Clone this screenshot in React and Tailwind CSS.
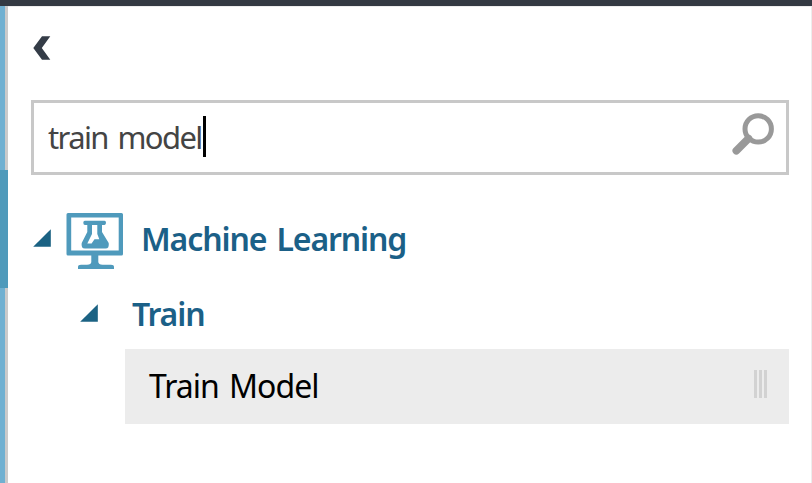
function ExpandedArrow() {
  return (
    <svg className="block h-[18px] w-[18px] shrink-0" viewBox="0 0 18 18">
      <path d="M17.800 0.200V17.800H0.200Z" fill="#1b6283" />
    </svg>
  );
}

function ChevronLeft() {
  return (
    <svg className="block h-[24px] w-[18px]" viewBox="0 0 18 24">
      <path d="M9 0.300H17.300L8.800 12L17.300 23.700H9L0.300 12Z" fill="#343c47" />
    </svg>
  );
}

function SearchIcon() {
  return (
    <svg className="block h-[42px] w-[42px]" viewBox="0 0 42 42" fill="none" stroke="#999999">
      <circle cx="26.2" cy="15.9" r="13.2" strokeWidth="5" />
      <path d="M16.5 25.500L4.300 37.700" strokeWidth="7.600" strokeLinecap="round" />
    </svg>
  );
}

function LabMonitorIcon() {
  return (
    <svg className="block h-[57px] w-[58px] shrink-0" viewBox="0 0 58 57" fill="#4f9abc">
      <path
        fillRule="evenodd"
        d="M2 0H55.500Q57 0 57 1.500V41Q57 42.500 55.500 42.500H2Q0.500 42.500 0.500 41V1.500Q0.500 0 2 0ZM5.200 4.500V37.500H52.700V4.500Z"
      />
      <path d="M25.300 42H32.300V49Q32.500 51.500 36.500 51.700H45Q48 51.700 48 54V56H12V54Q12 51.700 15 51.700H21Q25.300 51.500 25.300 49Z" />
      <path
        fillRule="evenodd"
        d="M19 7.700H38.500Q40 7.700 40 9.800T38.500 12H36V19L42.700 30Q43.500 35.500 39.500 35.500H19Q14.800 35.500 15.700 30L21.300 19V12H19Q17.300 12 17.300 9.800T19 7.700ZM26 12V21L21.300 30.500H25.600L28.500 26.300H33.300L31.300 21V12Z"
      />
    </svg>
  );
}

export default function App() {
  return (
    <div className="flex h-[483px] w-[812px] flex-col overflow-hidden bg-white font-['Noto_Sans','Open_Sans',sans-serif] text-[32px] leading-[44px]">
      <header className="h-[6px] shrink-0 bg-[#343a43]" />
      <div className="flex min-h-0 flex-1">
        <aside className="flex w-2 shrink-0 flex-col">
          <div className="h-[164px] border-r-[3px] border-[#cacaca] bg-[#70b0d1]" />
          <div className="h-[118px] bg-[#4f9abb]" />
          <div className="flex-1 border-r-[3px] border-[#cacaca] bg-[#70b0d1]" />
        </aside>
        <main className="min-w-0 flex-1 border-r border-t border-[#ededed] pl-[23px] pr-[22px]">
          <button className="mt-[29px] ml-[2px] block" aria-label="Collapse">
            <ChevronLeft />
          </button>
          <div className="mt-[40px] flex h-[75px] items-start border-[3px] border-[#c8c8c8] pl-[14px] pr-[12px]">
            <div className="mt-[12px] flex flex-1 items-start text-[#444444]">
              <span className="w-[155px] whitespace-nowrap text-[31px] leading-[45px] tracking-[-1.6px] [word-spacing:3px]">train model</span>
              <span className="mt-px h-[41px] w-[3px] shrink-0 bg-black" />
            </div>
            <div className="mt-[10px]">
              <SearchIcon />
            </div>
          </div>
          <div className="mt-[38px] flex h-[57px] items-start text-[#1b6087]">
            <div className="mt-[16px] ml-[2px]">
              <ExpandedArrow />
            </div>
            <div className="ml-[15px]">
              <LabMonitorIcon />
            </div>
            <span className="mt-[4px] ml-[17px] whitespace-nowrap font-[560] tracking-[-1.12px] [word-spacing:3px]">Machine Learning</span>
          </div>
          <div className="mt-[18px] flex h-[61px] items-start text-[#1b6087]">
            <div className="mt-[16px] ml-[49px]">
              <ExpandedArrow />
            </div>
            <span className="mt-[4px] ml-[34px] whitespace-nowrap font-[560] tracking-[-1.12px]">Train</span>
          </div>
          <div className="ml-[94px] flex h-[75px] items-start justify-between bg-[#ececec] pl-[24px] pr-[22px] text-black">
            <span className="mt-[15px] whitespace-nowrap tracking-[-1px] [word-spacing:3px]">Train Model</span>
            <div className="mt-[21px] flex h-[28px] gap-[2px]">
              <i className="w-[3px] bg-[#d2d2d2]" />
              <i className="w-[3px] bg-[#d2d2d2]" />
              <i className="w-[3px] bg-[#d2d2d2]" />
            </div>
          </div>
        </main>
      </div>
    </div>
  );
}
